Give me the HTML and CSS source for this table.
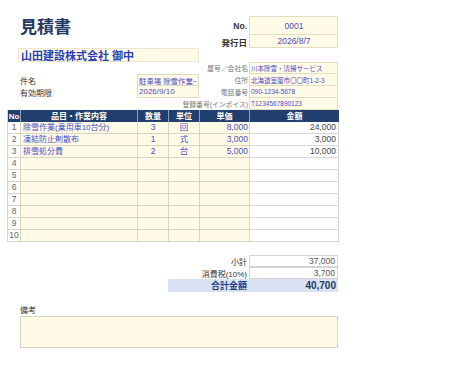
FILE: index.html
```html
<!DOCTYPE html>
<html lang="ja">
<head>
<meta charset="utf-8">
<title>見積書</title>
<link rel="stylesheet" href="styles.css">
</head>
<body>
<div class="sheet">
  <div class="cols head">
    <h1 class="title">見積書</h1>
    <div class="lbl-b a-nol">No.</div>
    <div class="field center a-nob">0001</div>
    <div class="lbl-b a-dl">発行日</div>
    <div class="field center notop a-db">2026/8/7</div>
    <div class="client a-cl">山田建設株式会社 御中</div>
    <div class="lbl-s a-il1">屋号／会社名</div>
    <div class="field small a-ib1">川本除雪・清掃サービス</div>
    <div class="lbl a-k1">件名</div>
    <div class="field clip a-v1">駐車場 除雪作業~</div>
    <div class="lbl-s a-il2">住所</div>
    <div class="field small notop a-ib2">北海道室蘭市〇〇町1-2-3</div>
    <div class="lbl a-k2">有効期限</div>
    <div class="field notop a-v2">2026/9/10</div>
    <div class="lbl-s a-il3">電話番号</div>
    <div class="field small notop a-ib3">090-1234-5678</div>
    <div class="lbl-s a-il4">登録番号(インボイス)</div>
    <div class="field small notop a-ib4">T1234567890123</div>
  </div>

  <div class="table">
    <div class="cols trow thead">
      <div>No</div><div>品目・作業内容</div><div>数量</div><div>単位</div><div>単価</div><div>金額</div>
    </div>
    <div class="cols trow">
      <div class="no">1</div><div class="in left">除雪作業(乗用車10台分)</div><div class="in">3</div><div class="in">回</div><div class="in right">8,000</div><div class="amt">24,000</div>
    </div>
    <div class="cols trow">
      <div class="no">2</div><div class="in left">凍結防止剤散布</div><div class="in">1</div><div class="in">式</div><div class="in right">3,000</div><div class="amt">3,000</div>
    </div>
    <div class="cols trow">
      <div class="no">3</div><div class="in left">排雪処分費</div><div class="in">2</div><div class="in">台</div><div class="in right">5,000</div><div class="amt">10,000</div>
    </div>
    <div class="cols trow"><div class="no">4</div><div class="in"></div><div class="in"></div><div class="in"></div><div class="in"></div><div class="amt"></div></div>
    <div class="cols trow"><div class="no">5</div><div class="in"></div><div class="in"></div><div class="in"></div><div class="in"></div><div class="amt"></div></div>
    <div class="cols trow"><div class="no">6</div><div class="in"></div><div class="in"></div><div class="in"></div><div class="in"></div><div class="amt"></div></div>
    <div class="cols trow"><div class="no">7</div><div class="in"></div><div class="in"></div><div class="in"></div><div class="in"></div><div class="amt"></div></div>
    <div class="cols trow"><div class="no">8</div><div class="in"></div><div class="in"></div><div class="in"></div><div class="in"></div><div class="amt"></div></div>
    <div class="cols trow"><div class="no">9</div><div class="in"></div><div class="in"></div><div class="in"></div><div class="in"></div><div class="amt"></div></div>
    <div class="cols trow"><div class="no">10</div><div class="in"></div><div class="in"></div><div class="in"></div><div class="in"></div><div class="amt"></div></div>
  </div>

  <div class="totals">
    <div class="cols srow">
      <div class="slbl">小計</div><div class="sval">37,000</div>
    </div>
    <div class="cols srow">
      <div class="slbl">消費税(10%)</div><div class="sval notop">3,700</div>
    </div>
    <div class="cols srow grand">
      <div class="glbl">合計金額</div><div class="gval">40,700</div>
    </div>
  </div>

  <div class="remarks">
    <div class="rlbl">備考</div>
    <div class="rbox"></div>
  </div>
</div>
</body>
</html>
```

FILE: styles.css
```css
* { box-sizing: border-box; }
body {
  margin: 0;
  background: #fff;
  font-family: "Liberation Sans", "Noto Sans CJK JP", sans-serif;
  color: #333;
}
.sheet {
  width: 338px;
  padding: 16px 0 0 7px;
}
.cols {
  display: grid;
  grid-template-columns: 13px 117px 31px 31px 50px 89px;
}

/* ---------- header ---------- */
.head {
  grid-template-rows: 19px 13px 14px 12px 12px 12px 12px;
  grid-template-areas:
    ". title title title nol nob"
    ". . . . dl db"
    ". cl cl cl . ."
    ". . il1 il1 il1 ib1"
    ". k1 v1 v1 il2 ib2"
    ". k2 v2 v2 il3 ib3"
    ". il4 il4 il4 il4 ib4";
}
.title {
  grid-area: title;
  margin: 0;
  font-size: 17px;
  line-height: 19px;
  font-weight: bold;
  color: #1f3864;
  font-family: "Noto Sans CJK JP", sans-serif;
}
.a-nol { grid-area: nol; }
.a-nob { grid-area: nob; }
.a-dl { grid-area: dl; }
.a-db { grid-area: db; }
.a-cl { grid-area: cl; }
.a-il1 { grid-area: il1; }
.a-ib1 { grid-area: ib1; }
.a-il2 { grid-area: il2; }
.a-ib2 { grid-area: ib2; }
.a-il3 { grid-area: il3; }
.a-ib3 { grid-area: ib3; }
.a-il4 { grid-area: il4; }
.a-ib4 { grid-area: ib4; }
.a-k1 { grid-area: k1; }
.a-v1 { grid-area: v1; }
.a-k2 { grid-area: k2; }
.a-v2 { grid-area: v2; }

.lbl-b, .lbl-s, .lbl {
  display: flex;
  align-items: center;
  white-space: nowrap;
}
.lbl-b {
  justify-content: flex-end;
  padding-right: 2px;
  font-size: 8.5px;
  font-weight: bold;
  color: #333;
}
.lbl-s {
  justify-content: flex-end;
  padding-right: 1px;
  font-size: 6.8px;
  color: #777;
}
.lbl {
  font-size: 8px;
  color: #333;
}
.field {
  display: flex;
  align-items: center;
  padding-left: 1px;
  background: #fffbe6;
  border: 1px solid #e2ddc2;
  color: #4b4bcb;
  font-size: 8px;
  white-space: nowrap;
  overflow: hidden;
}
.field.center { justify-content: center; font-size: 8.5px; }
.field.small { font-size: 6.5px; }
.field.clip { font-size: 7.4px; }
.notop { border-top: none; }
.client {
  display: flex;
  align-items: center;
  margin-left: -2px;
  padding-left: 2px;
  background: #fffbe6;
  border: 1px solid #ebe6cc;
  font-size: 11px;
  font-weight: bold;
  color: #2b3fb8;
  white-space: nowrap;
}

/* ---------- table ---------- */
.table {
  border-left: 1px solid #d4d4d4;
}
.trow {
  height: 12px;
}
.trow > div {
  display: flex;
  align-items: center;
  justify-content: center;
  border-right: 1px solid #d8d5c2;
  border-bottom: 1px solid #d8d5c2;
  font-size: 8px;
  line-height: 11px;
  white-space: nowrap;
  overflow: hidden;
}
.thead > div {
  background: #203f6e;
  color: #fff;
  font-weight: bold;
  border-right: 1px solid #8ea0bd;
  border-bottom: none;
}
.thead > div:last-child { border-right: none; }
.trow .no {
  background: #fff;
  color: #666;
  font-size: 8.5px;
}
.trow .in {
  background: #fffbe6;
  color: #4b4bcb;
  font-size: 8.5px;
}
.trow .in.left { justify-content: flex-start; padding-left: 2px; font-size: 8px; }
.trow .in.right { justify-content: flex-end; padding-right: 1px; }
.trow .amt {
  background: #fff;
  justify-content: flex-end;
  padding-right: 2px;
  color: #444;
  font-size: 8.5px;
  border-right: 1px solid #d0d0d0;
  border-bottom: 1px solid #d8d8d8;
}

/* ---------- totals ---------- */
.totals {
  margin-top: 13px;
}
.srow { height: 12px; }
.slbl, .glbl {
  grid-column: 4 / 6;
  display: flex;
  align-items: center;
  justify-content: flex-end;
  padding-right: 2px;
  font-size: 8px;
  color: #333;
}
.sval, .gval {
  grid-column: 6;
  display: flex;
  align-items: center;
  justify-content: flex-end;
  padding-right: 2px;
}
.sval {
  border: 1px solid #d4d4d4;
  font-size: 8.5px;
  color: #555;
}
.glbl {
  background: #d9e2f3;
  font-size: 9px;
  font-weight: bold;
  color: #1f3c88;
}
.gval {
  background: #d9e2f3;
  font-size: 10px;
  font-weight: bold;
  color: #1f3864;
}

/* ---------- remarks ---------- */
.remarks {
  margin: 14px 0 0 13px;
}
.rlbl {
  font-size: 8px;
  line-height: 11px;
  color: #333;
}
.rbox {
  height: 32px;
  background: #fffbe6;
  border: 1px solid #d8d5c2;
}
```
